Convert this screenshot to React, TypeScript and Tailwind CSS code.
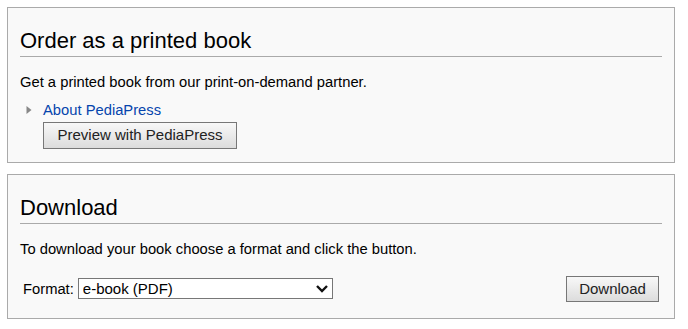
const Box = ({ title, children }: { title: string; children: React.ReactNode }) => (
  <div className="border border-[#aaaaaa] bg-[#f9f9f9] px-3 pt-5">
    <h2 className="border-b border-[#aaaaaa] pb-[2px] text-[22px] leading-[26px] text-black">{title}</h2>
    {children}
  </div>
);

export default function App() {
  return (
    <div className="flex flex-col gap-[11px] bg-white p-[7px] pr-[13px] font-['Liberation_Sans',Arial,sans-serif] text-[14.75px] text-black">
      <Box title="Order as a printed book">
        <p className="mt-[15px] leading-5">Get a printed book from our print-on-demand partner.</p>
        <div className="mt-2 flex items-center leading-5">
          <svg width="6" height="10" viewBox="0 0 6 10" className="ml-[6px]">
            <path d="M0.5 1 L5.5 5 L0.5 9 Z" fill="#888" />
          </svg>
          <a href="#" className="ml-[11px] text-[#0645ad]">About PediaPress</a>
        </div>
        <button className="mb-[13px] ml-[23px] mt-[2px] h-[27px] w-[194px] border border-[#777] bg-gradient-to-b from-[#f8f8f8] to-[#dcdcdc] text-[15px] text-[#222]">
          Preview with PediaPress
        </button>
      </Box>
      <Box title="Download">
        <p className="mt-[15px] leading-5">To download your book choose a format and click the button.</p>
        <div className="mb-[16px] mt-[17px] flex items-center justify-between">
          <label className="ml-[3px] flex items-center gap-[4px]">
            Format:
            <span className="relative">
              <select className="h-[21px] w-[255px] appearance-none border border-[#777] bg-white pl-1 text-[15px] leading-[19px] outline-none">
                <option>e-book (PDF)</option>
              </select>
              <svg width="12" height="8" viewBox="0 0 12 8" className="pointer-events-none absolute right-[5px] top-[7px]">
                <path d="M1 1 L6 6 L11 1" fill="none" stroke="#111" strokeWidth="2.4" />
              </svg>
            </span>
          </label>
          <button className="mr-[3px] h-[26px] w-[93px] border border-[#777] bg-gradient-to-b from-[#f8f8f8] to-[#dcdcdc] text-[15px] text-[#222]">
            Download
          </button>
        </div>
      </Box>
    </div>
  );
}
